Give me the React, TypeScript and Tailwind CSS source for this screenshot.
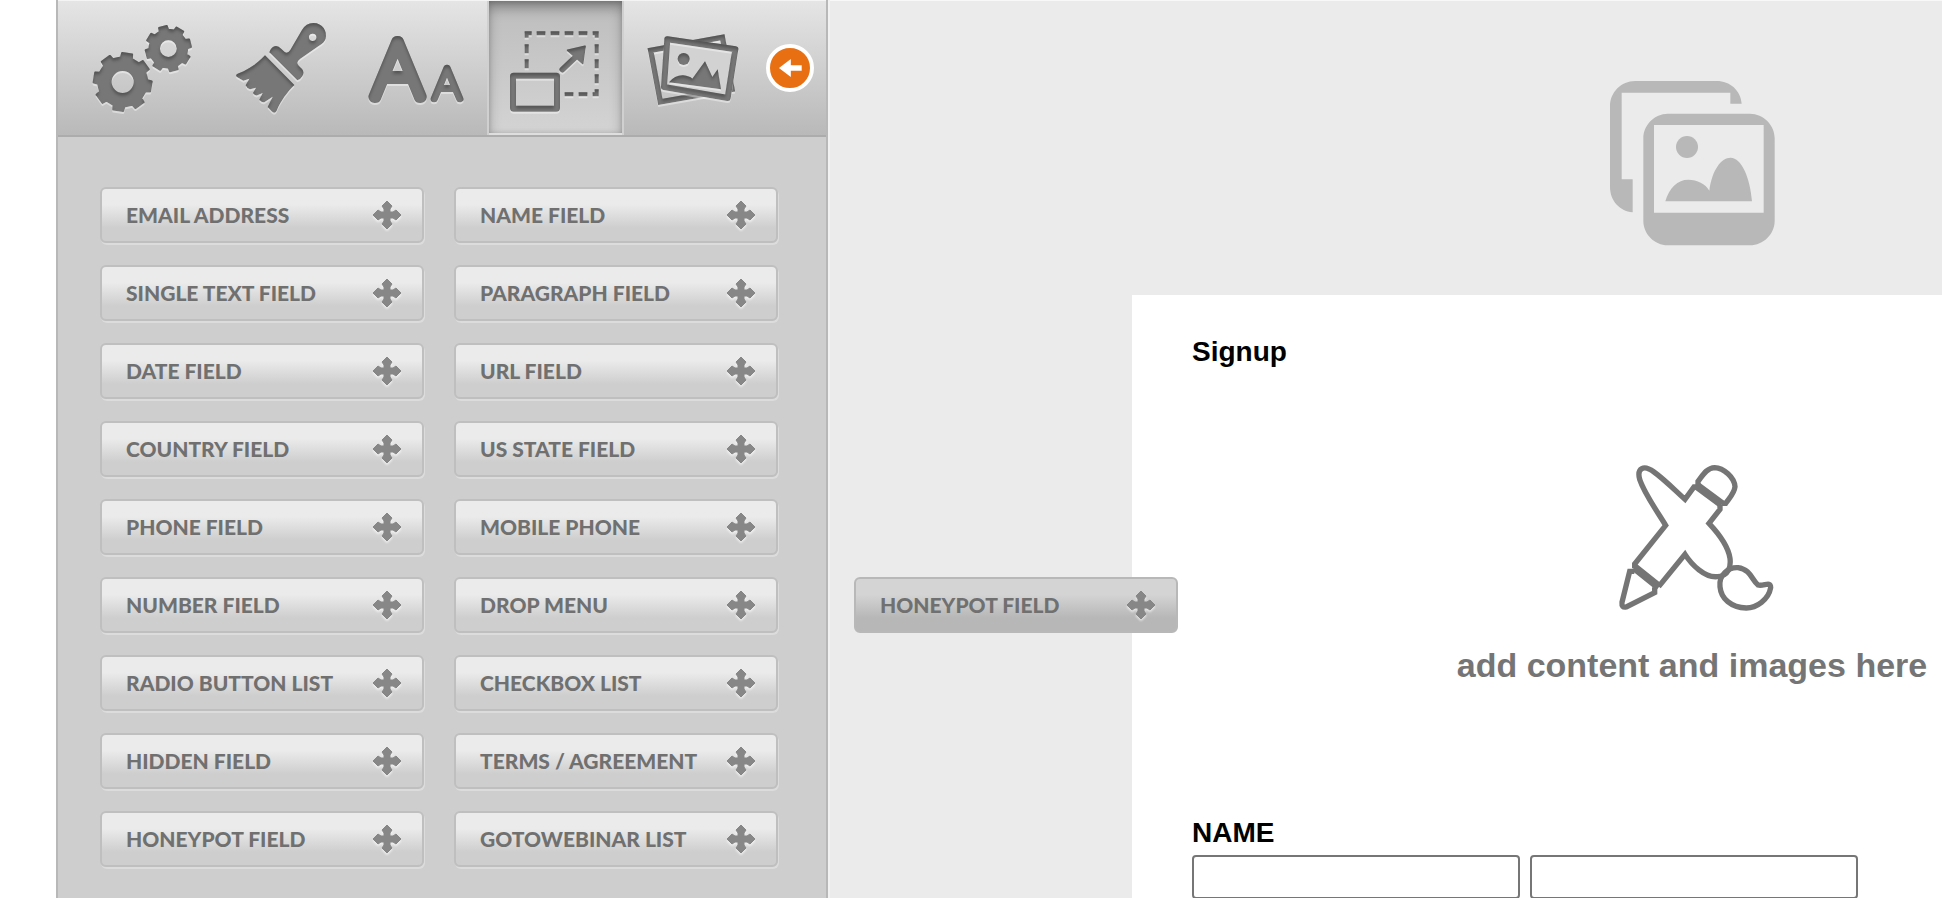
import React from 'react';

const fields = [
  'Email Address', 'Name Field',
  'Single Text Field', 'Paragraph Field',
  'Date Field', 'URL Field',
  'Country Field', 'US State Field',
  'Phone Field', 'Mobile Phone',
  'Number Field', 'Drop Menu',
  'Radio Button List', 'Checkbox List',
  'Hidden Field', 'Terms / Agreement',
  'Honeypot Field', 'GoToWebinar List',
];

// Eight-toothed gear with a round hole, rot in degrees
const gearPath = (cx: number, cy: number, outer: number, inner: number, hole: number, rot: number) => {
  const pts: string[] = [];
  for (let i = 0; i < 8; i++) {
    const a = rot + i * 45;
    [[-13, inner], [-10, outer], [10, outer], [13, inner]].forEach(([da, r]) => {
      const t = ((a + da) * Math.PI) / 180;
      pts.push(`${(cx + r * Math.sin(t)).toFixed(1)} ${(cy - r * Math.cos(t)).toFixed(1)}`);
    });
  }
  return `M${pts.join('L')}Z M${cx - hole} ${cy}a${hole} ${hole} 0 1 0 ${hole * 2} 0a${hole} ${hole} 0 1 0 ${-hole * 2} 0Z`;
};

// Pressed-in look shared by the toolbar icons
const EmbossFilter = () => (
  <svg width="0" height="0" className="absolute" aria-hidden="true">
    <filter id="emboss" x="-10%" y="-10%" width="120%" height="125%">
      <feOffset in="SourceAlpha" dy="8" result="down" />
      <feGaussianBlur in="down" stdDeviation="4" result="soft" />
      <feComposite in="SourceAlpha" in2="soft" operator="out" result="edge" />
      <feFlood floodColor="#000" floodOpacity="0.5" />
      <feComposite in2="edge" operator="in" result="inner" />
      <feOffset in="SourceAlpha" dy="5" result="low" />
      <feGaussianBlur in="low" stdDeviation="2" result="lowSoft" />
      <feFlood floodColor="#fff" floodOpacity="0.4" />
      <feComposite in2="lowSoft" operator="in" result="glow" />
      <feMerge>
        <feMergeNode in="glow" />
        <feMergeNode in="SourceGraphic" />
        <feMergeNode in="inner" />
      </feMerge>
    </filter>
  </svg>
);

const GearsIcon = () => (
  <svg viewBox="78 3 411 402" className="w-full h-full">
    <g filter="url(#emboss)" fill="#777" stroke="#777" strokeWidth="6" strokeLinejoin="round" fillRule="evenodd">
      <path d={gearPath(218, 246, 87, 74, 36, 9)} />
      <path d={gearPath(355, 146, 68, 57, 28, -14)} />
    </g>
  </svg>
);

const BrushIcon = () => (
  <svg viewBox="489 3 411 402" className="w-full h-full">
    <g filter="url(#emboss)" fill="#777" fillRule="evenodd">
      <path d="M658 157Q664 139 678 138Q686 138 694 147L704 156Q713 162 721 150L756 90Q768 69 790 69C818 69 832 94 827 116Q824 127 806 138L750 177Q737 187 746 197L756 207Q764 218 757 229Q752 238 742 241ZM777 112a11 11 0 1 0 22 0a11 11 0 1 0 -22 0Z" />
      <path d="M645 166L733 255C712 276 692 303 680 332Q674 343 665 334L653 321L668 290L645 305Q638 310 628 299L638 279L622 286Q614 288 609 279L618 263L600 268Q591 266 587 256L598 236L580 242L561 231Q555 225 563 221C594 210 622 191 645 166Z" />
    </g>
  </svg>
);

const TypeIcon = () => (
  <svg viewBox="30 3 411 402" className="w-full h-full">
    <g filter="url(#emboss)" fill="#777" stroke="#777" strokeLinejoin="round" textAnchor="middle" className="font-['Lato',sans-serif] font-thin">
      <text x="173" y="290" fontSize="234" strokeWidth="36">A</text>
      <text x="321" y="296" fontSize="132" strokeWidth="20">A</text>
    </g>
  </svg>
);

const ResizeIcon = () => (
  <svg viewBox="441 3 411 402" className="w-full h-full">
    <g filter="url(#emboss)" fill="none" stroke="#777" strokeWidth="12">
      <path d="M560 113V100H575M758 100H770V113M770 268V283H758" />
      <path d="M590 100H745" strokeDasharray="26 16" />
      <path d="M560 133V207M770 133V252" strokeDasharray="27 18" />
      <path d="M674 283H745" strokeDasharray="26 16" />
      <rect x="519" y="227" width="132" height="99" rx="2" strokeWidth="18" />
      <path d="M667 209L712 166" strokeWidth="17" strokeLinecap="round" />
      <path d="M735 139L683 151L728 190Z" fill="#777" strokeWidth="5" strokeLinejoin="round" />
    </g>
  </svg>
);

const PhotosIcon = () => (
  <svg viewBox="12 3 411 402" className="w-full h-full">
    <g filter="url(#emboss)" fill="none" stroke="#777" strokeWidth="16">
      <path d="M92 151L307 112L336 268L121 306Z" />
    </g>
    <path d="M142 116L347 148L323 296L131 261Z" fill="#d2d2d2" />
    <g filter="url(#emboss)" fill="#777">
      <path d="M142 118L346 148L323 294L132 261Z" fill="none" stroke="#777" strokeWidth="18" strokeLinejoin="round" />
      <circle cx="191" cy="177" r="18" />
      <path d="M147 247Q165 225 190 226Q208 228 217 236L255 184L277 231L293 208L303 268Z" />
    </g>
  </svg>
);

const MoveIcon = () => (
  <svg viewBox="0 0 30 30" className="w-[30px] h-[30px] drop-shadow-[0_2px_1px_rgba(255,255,255,0.6)]" fill="#878787" stroke="#878787" strokeLinejoin="round" aria-hidden="true">
    <path d="M15 1L20 6L18 9V12H21L24 10L29 15L24 20L21 18H18V21L20 24L15 29L10 24L12 21V18H9L6 20L1 15L6 10L9 12H12V9L10 6Z" />
  </svg>
);

const GalleryIcon = () => (
  <svg viewBox="60 62 495 495" className="w-[165px] h-[165px]" fill="#b8b8b8" fillRule="evenodd" role="img" aria-label="Header image">
    <path d="M60 137C60 96 94 62 135 62H380C420 62 452 90 455 130H421V97H95V357H128V456C88 452 60 420 60 380Z" />
    <path d="M233 160H480C520 160 554 194 554 233V482C554 521 520 555 480 555H233C194 555 160 521 160 482V233C160 194 194 160 233 160ZM192 194V457H521V194Z" />
    <circle cx="291" cy="260" r="33" />
    <path d="M226 423C238 382 263 358 295 358C322 358 346 370 358 391C366 330 393 292 422 292C454 292 480 350 486 423Z" />
  </svg>
);

const ToolsIcon = () => (
  <svg viewBox="61 72 492 444" className="w-[164px] h-[148px]" fill="none" stroke="#757575" strokeWidth="16" aria-hidden="true">
    <path d="M325 141H313L286 178C258 153 224 118 193 96C162 73 141 84 150 118C164 160 198 207 228 256L135 372V385M207 440L286 343C306 374 345 414 383 410C418 408 424 380 421 355C416 320 390 284 358 250L391 208V195" />
    <path d="M325 136V124C341 103 352 84 375 83C402 84 434 112 436 140C434 160 418 175 408 190H396" />
    <path d="M321 137L397 193M134 382L208 441" strokeWidth="25" />
    <path d="M134 394H120L97 487Q95 504 110 501L195 458V442" />
    <path d="M391 440C387 404 417 381 445 383C483 388 487 421 505 435C522 440 543 422 543 443C537 479 500 504 470 504C424 502 394 476 391 440Z" />
  </svg>
);

const tabs = [
  { name: 'Settings', icon: <GearsIcon /> },
  { name: 'Style', icon: <BrushIcon /> },
  { name: 'Typography', icon: <TypeIcon /> },
  { name: 'Fields', icon: <ResizeIcon /> },
  { name: 'Images', icon: <PhotosIcon /> },
];

interface FieldButtonProps {
  label: string;
  dragging?: boolean;
}

const FieldButton: React.FC<FieldButtonProps> = ({ label, dragging }) => (
  <button
    className={`flex w-full h-14 items-center justify-between rounded-md border-2 pl-6 pr-5 text-[21px] leading-7 font-black uppercase whitespace-nowrap text-[#707070] ${
      dragging
        ? 'border-[#b8b8b8] bg-linear-to-b from-[#d4d4d4] from-30% to-[#b7b7b7] to-75%'
        : 'border-[#bfbfbf] bg-linear-to-b from-[#ebebeb] from-30% to-[#cecece] to-75% shadow-[1px_2px_0_#dcdcdc]'
    }`}
  >
    {label}
    <MoveIcon />
  </button>
);

const App: React.FC = () => {
  return (
    <div className="relative flex h-screen overflow-hidden bg-white pl-14 font-['Lato',sans-serif]">
      <EmbossFilter />

      <aside className="relative z-10 w-[772px] shrink-0 border-x-2 border-[#b8b8b8] bg-[#cecece] shadow-[2px_0_0_#f2f2f2]">
        <nav className="flex items-center border-t border-t-[#f4f4f4] border-b-2 border-b-[#acacac] bg-linear-to-b from-[#e5e5e5] to-[#b9b9b9] pl-[18px]">
          {tabs.map((tab) => (
            <button
              key={tab.name}
              aria-label={tab.name}
              className={`w-[137px] h-[134px] ${
                tab.name === 'Fields'
                  ? 'bg-linear-to-b from-[#bdbdbd] to-[#d4d4d4] shadow-[inset_2px_0_0_#d0d0d0,inset_-2px_0_0_#d0d0d0,inset_0_-2px_0_#dedede,inset_0_6px_14px_rgba(0,0,0,0.35),inset_0_0_6px_rgba(0,0,0,0.25)]'
                  : ''
              }`}
            >
              {tab.icon}
            </button>
          ))}
          <button aria-label="Collapse panel" className="ml-[5px] flex w-12 h-12 items-center justify-center rounded-full bg-[#e97012] border-4 border-white">
            <svg viewBox="466 177 82 60" className="w-[27px] h-5" fill="#fff">
              <path d="M472 207L508 180V199H541V215H508V234Z" />
            </svg>
          </button>
        </nav>

        <div className="grid grid-cols-2 gap-x-[30px] gap-y-[22px] pt-[50px] pb-8 pl-[42px] pr-12">
          {fields.map((label) => (
            <FieldButton key={label} label={label} />
          ))}
        </div>
      </aside>

      <main className="min-w-0 flex-1 overflow-hidden border-t border-[#f8f8f8] bg-[#ebebeb] font-['Liberation_Sans',sans-serif]">
        <div className="flex min-w-[1728px] flex-col items-center">
          <div className="pt-20 pb-[49px]">
            <GalleryIcon />
          </div>

          <form className="w-[1120px] bg-white px-[60px] pt-[41px] pb-16">
            <h1 className="text-[28px] leading-8 font-bold text-black">Signup</h1>

            <div className="flex flex-col items-center gap-[33px] pt-24 pb-[132px]">
              <ToolsIcon />
              <p className="text-[34px] leading-10 font-bold text-[#757575]">add content and images here</p>
            </div>

            <label htmlFor="first-name" className="block text-[28px] leading-8 font-bold text-black">NAME</label>
            <div className="flex gap-[10px] pt-1.5">
              <input id="first-name" type="text" className="w-[328px] h-11 rounded border-2 border-[#767676] bg-white px-2" />
              <input aria-label="Last name" type="text" className="w-[328px] h-11 rounded border-2 border-[#767676] bg-white px-2" />
            </div>
          </form>
        </div>
      </main>

      {/* Field being dragged onto the form */}
      <div className="absolute left-[854px] top-[577px] z-20 w-[324px]">
        <FieldButton label="Honeypot Field" dragging />
      </div>
    </div>
  );
};

export default App;
